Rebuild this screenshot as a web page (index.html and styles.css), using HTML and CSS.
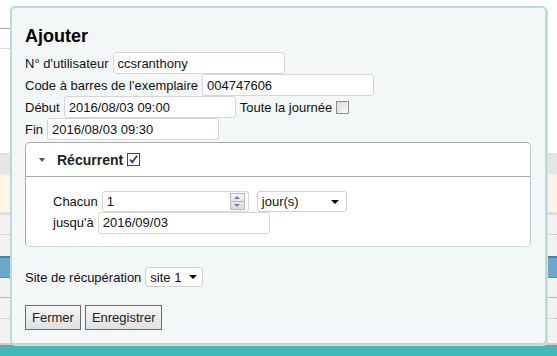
FILE: index.html
```html
<!DOCTYPE html>
<html lang="fr">
<head>
    <meta charset="UTF-8">
    <title>Ajouter</title>
    <link rel="stylesheet" href="styles.css">
</head>
<body>
    <div class="page-behind">
        <div class="bg-top"></div>
        <div class="bg-nav"></div>
        <div class="bg-blank"></div>
        <div class="bg-thead"></div>
        <div class="bg-note"></div>
        <div class="bg-row"><div class="dots"></div></div>
        <div class="bg-active"></div>
        <div class="bg-row2"></div>
        <div class="bg-row3"><div class="dots"></div></div>
        <div class="bg-footer"></div>
    </div>

    <div class="dialog">
        <h2>Ajouter</h2>
        <div class="field">
            <label>N° d'utilisateur</label>
            <input type="text" class="txt" value="ccsranthony">
        </div>
        <div class="field">
            <label>Code à barres de l'exemplaire</label>
            <input type="text" class="txt" value="004747606">
        </div>
        <div class="field">
            <label>Début</label>
            <input type="text" class="txt" value="2016/08/03 09:00">
            <label class="allday">Toute la journée</label>
            <span class="check"></span>
        </div>
        <div class="field">
            <label>Fin</label>
            <input type="text" class="txt" value="2016/08/03 09:30">
        </div>

        <div class="recurring">
            <div class="recurring-head">
                <span class="arrow"></span>
                <span class="recurring-title">Récurrent</span>
                <span class="check checked">
                    <svg width="11" height="11" viewBox="0 0 11 11"><path d="M2 5.5 L4.3 8.2 L9 1.8" fill="none" stroke="#1d3fa0" stroke-width="1.8"/></svg>
                </span>
            </div>
            <div class="recurring-body">
                <div class="field">
                    <label>Chacun</label>
                    <div class="spin">
                        <span class="spin-val">1</span>
                        <span class="spin-btns">
                            <span class="up"></span>
                            <span class="down"></span>
                        </span>
                    </div>
                    <div class="select unit">jour(s)<span class="caret"></span></div>
                </div>
                <div class="field">
                    <label>jusqu'à</label>
                    <input type="text" class="txt" value="2016/09/03">
                </div>
            </div>
        </div>

        <div class="field pickup">
            <label>Site de récupération</label>
            <div class="select site">site 1<span class="caret"></span></div>
        </div>

        <div class="actions">
            <button>Fermer</button>
            <button>Enregistrer</button>
        </div>
    </div>
</body>
</html>
```

FILE: styles.css
```css
body {
    margin: 0;
    font-family: "Liberation Sans", Arial, sans-serif;
    font-size: 13px;
    color: #111;
    background-color: #fff;
    width: 557px;
    height: 356px;
    overflow: hidden;
    position: relative;
}

/* page under the modal */
.page-behind {
    display: flex;
    flex-direction: column;
    height: 356px;
}
.bg-top {
    width: 300px;
    height: 28px;
    border-bottom: 1px solid #a8a8a8;
}
.bg-nav {
    width: 300px;
    height: 19px;
    border-bottom: 1px solid #dcdcdc;
}
.bg-blank {
    height: 104px;
}
.bg-thead {
    height: 20px;
    background-color: #e6e6e6;
    border-top: 1px solid #ddd;
}
.bg-note {
    height: 37px;
    background-color: #fcf6e3;
    border-top: 1px solid #ececec;
}
.bg-row {
    height: 41px;
    background-color: #f2f2f2;
    border-top: 3px solid #dedede;
}
.bg-row .dots, .bg-row3 .dots {
    margin-top: 19px;
    border-top: 1px dotted #bbb;
}
.bg-active {
    height: 19px;
    background-color: #6fa7c6;
    border-top: 2px solid #3d86b4;
}
.bg-row2 {
    height: 19px;
    background-color: #f2f2f2;
    border-top: 1px solid #4b94bf;
    border-bottom: 1px solid #bcbcbc;
}
.bg-row3 {
    height: 45px;
    background-color: #f2f2f2;
    border-bottom: 2px solid #cfcfcf;
}
.bg-row3 .dots {
    margin-top: 20px;
}
.bg-footer {
    flex: 1;
    background-color: #40b9b8;
}

/* modal */
.dialog {
    position: absolute;
    left: 10px;
    top: 6px;
    width: 506px;
    height: 317px;
    padding: 18px 14px 0 13px;
    background-color: #f3f7f8;
    border: 2px solid #b6dcdc;
    border-radius: 5px;
    box-shadow: 1px 1px 0 #d0dede;
}
.dialog h2 {
    margin: 0 0 5px;
    font-size: 18px;
    line-height: 21px;
    font-weight: bold;
    color: #000;
}
.field {
    display: flex;
    align-items: center;
    height: 22px;
    gap: 4px;
}
.field label {
    white-space: nowrap;
}
.txt {
    box-sizing: border-box;
    width: 172px;
    height: 22px;
    margin: 0;
    padding: 0 4px;
    border: 1px solid #d6d6d6;
    border-radius: 3px;
    background-color: #fff;
    font-family: inherit;
    font-size: 13px;
    color: #111;
}
.check {
    display: inline-block;
    box-sizing: border-box;
    width: 13px;
    height: 13px;
    border: 1px solid #8e8f8f;
    background: linear-gradient(135deg, #dcdcdc, #f8f8f8);
}
.check.checked {
    border-color: #1c5180;
    background: #fff;
}
.check svg {
    display: block;
}

/* recurring box */
.recurring {
    margin-top: 2px;
    width: 506px;
    box-sizing: border-box;
    background-color: #fff;
    border: 1px solid #aaa;
    border-bottom-color: #c6dcdc;
    border-right-color: #b8cccc;
    border-radius: 5px;
}
.recurring-head {
    display: flex;
    align-items: center;
    height: 33px;
    border-bottom: 1px solid #aaa;
    padding-left: 13px;
}
.arrow {
    width: 0;
    height: 0;
    border-left: 3px solid transparent;
    border-right: 3px solid transparent;
    border-top: 4px solid #555;
    margin-right: 12px;
    margin-top: 1px;
}
.recurring-title {
    font-size: 14px;
    font-weight: bold;
    color: #222;
    margin-right: 4px;
}
.recurring-body {
    padding: 14px 0 13px 27px;
}
.recurring-body .field {
    height: 21px;
}
.spin {
    box-sizing: border-box;
    width: 147px;
    height: 21px;
    display: flex;
    align-items: center;
    justify-content: space-between;
    border: 1px solid #d6d6d6;
    border-radius: 3px;
    padding: 0 3px 0 4px;
    background-color: #fff;
}
.spin-btns {
    display: flex;
    flex-direction: column;
    width: 13px;
    height: 15px;
    border: 1px solid #b8b8b8;
    background: linear-gradient(#f4f4f4, #dcdcdc);
}
.spin-btns span {
    flex: 1;
    display: flex;
    align-items: center;
    justify-content: center;
}
.spin-btns .up {
    border-bottom: 1px solid #b8b8b8;
}
.spin-btns .up::after {
    content: "";
    border-left: 3px solid transparent;
    border-right: 3px solid transparent;
    border-bottom: 3px solid #6a7f9a;
}
.spin-btns .down::after {
    content: "";
    border-left: 3px solid transparent;
    border-right: 3px solid transparent;
    border-top: 3px solid #6a7f9a;
}
.select {
    box-sizing: border-box;
    height: 21px;
    display: flex;
    align-items: center;
    justify-content: space-between;
    padding: 0 7px 0 4px;
    border: 1px solid #d0d0d0;
    border-radius: 3px;
    background-color: #fff;
}
.select .caret {
    border-left: 4px solid transparent;
    border-right: 4px solid transparent;
    border-top: 4px solid #000;
}
.unit {
    width: 90px;
    margin-left: 4px;
}
.site {
    width: 58px;
    height: 20px;
    padding-right: 5px;
}
.pickup {
    margin-top: 19px;
}
.actions {
    display: flex;
    gap: 4px;
    margin-top: 17px;
}
button {
    height: 25px;
    padding: 0 6px;
    font-family: inherit;
    font-size: 13px;
    color: #222;
    border: 1px solid #6c6c6c;
    border-radius: 0;
    background: linear-gradient(#f6f6f6, #e0e0e0);
}
```
